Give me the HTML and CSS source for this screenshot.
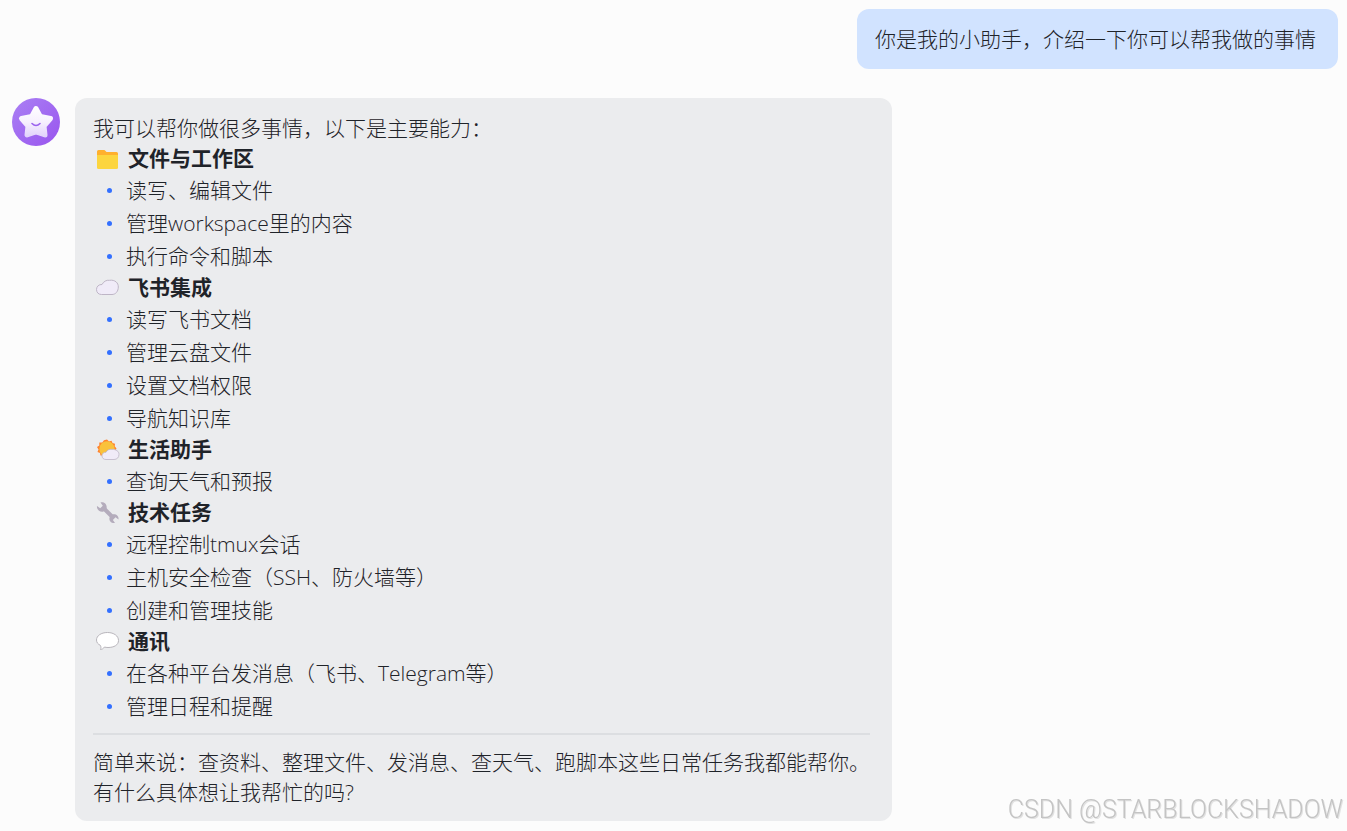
FILE: index.html
```html
<!DOCTYPE html>
<html lang="zh-CN">
<head>
    <meta charset="UTF-8">
    <meta name="viewport" content="width=device-width, initial-scale=1.0">
    <title>小助手</title>
    <link rel="stylesheet" href="styles.css">
</head>
<body>
    <main class="chat">
        <div class="message user">
            <div class="bubble">你是我的小助手，介绍一下你可以帮我做的事情</div>
        </div>

        <div class="message bot">
            <svg class="avatar" viewBox="0 0 48 48" aria-hidden="true">
                <defs>
                    <linearGradient id="purple" x1="0" y1="0" x2="1" y2="1">
                        <stop offset="0" stop-color="#aa80f4"/>
                        <stop offset="1" stop-color="#9955ee"/>
                    </linearGradient>
                    <linearGradient id="star" gradientUnits="userSpaceOnUse" x1="0" y1="8" x2="0" y2="40">
                        <stop offset="0" stop-color="#ffffff"/>
                        <stop offset="0.5" stop-color="#f7f0fe"/>
                        <stop offset="1" stop-color="#e0cffb"/>
                    </linearGradient>
                </defs>
                <circle cx="24" cy="24" r="24" fill="url(#purple)"/>
                <path d="M24 10.500 L28.300 18.500 L38.500 20.500 L32 28 L33 37 L24 34 L15 37 L16 28 L9.500 20.500 L19.700 18.500 Z" fill="url(#star)" stroke="url(#star)" stroke-width="5" stroke-linejoin="round"/>
                <path d="M20 25.500 Q24 29.500 28 25.500" fill="none" stroke="#9b62ee" stroke-width="1.600" stroke-linecap="round"/>
            </svg>
            <div class="bubble">
                <p>我可以帮你做很多事情，以下是主要能力：</p>

                <h2>
                    <svg class="icon" viewBox="0 0 24 24" aria-hidden="true">
                        <path d="M1 5.500 Q1 4 2.500 4 H8 Q9 4 9.500 5 L10.500 6 H20.500 Q22 6 22 7.500 V12 H1 Z" fill="#ffb02e"/>
                        <path d="M1 9 H22 V21.500 Q22 23 20.500 23 H2.500 Q1 23 1 21.500 Z" fill="#fcd53f"/>
                    </svg>
                    文件与工作区
                </h2>
                <ul>
                    <li>读写、编辑文件</li>
                    <li>管理workspace里的内容</li>
                    <li>执行命令和脚本</li>
                </ul>

                <h2>
                    <svg class="icon" viewBox="0 0 24 24" aria-hidden="true">
                        <path d="M5.500 19.500 C2.500 19.500 0.500 17.500 0.500 14.500 C0.500 11.500 2.800 9.300 6 9.500 C7.500 6.500 10.500 4.800 13.500 5.300 C19 4.500 22.500 8 22.300 12 C22.300 16.500 19.500 19.500 16 19.500 Z" fill="#f0ebf8" stroke="#beb5c6"/>
                    </svg>
                    飞书集成
                </h2>
                <ul>
                    <li>读写飞书文档</li>
                    <li>管理云盘文件</li>
                    <li>设置文档权限</li>
                    <li>导航知识库</li>
                </ul>

                <h2>
                    <svg class="icon" viewBox="0 0 24 24" aria-hidden="true">
                        <path d="M11 2.500 L13 4.500 L15.500 3.700 L16.500 6 L19 6.700 L18.700 9.300 L20.500 11.500 L19 14 L18.500 17 L16 18 L14 20.500 L11 19.500 L8.500 20.500 L7 18.500 L4.500 18.500 L4 16 L1.500 15 L2.500 12.500 L1 10 L3.300 8.500 L3.300 5.500 L6.300 5.500 L8 3.200 Z" fill="#ff822d"/>
                        <circle cx="11" cy="12" r="7.700" fill="#f9c23c"/>
                        <path d="M10 22.500 C7.500 22.500 6 21 6 18.800 C6 16.500 7.800 15 10 15.300 C11.200 12.800 13.500 12 16 12.300 C20 12.300 23 14.200 23 17.300 C23 20.500 21 22.500 18 22.500 Z" fill="#f0ebf8" stroke="#beb5c6" stroke-width="0.800"/>
                    </svg>
                    生活助手
                </h2>
                <ul>
                    <li>查询天气和预报</li>
                </ul>

                <h2>
                    <svg class="icon" viewBox="0 0 24 24" aria-hidden="true">
                        <path d="M7 7.500 L17 17.500" stroke="#b4acbc" stroke-width="4" fill="none"/>
                        <path d="M4.500 2.500 C8 1.500 11.500 4.500 10.500 8.500 L7.500 11.500 C4 12.500 0.500 9.500 1 6 L4.200 8.300 L6.800 5.700 Z" fill="#b4acbc"/>
                        <path d="M19 23 C15.500 23.500 12.700 21 13.500 17.500 L16.500 14.500 C20 13.800 23 16 22.500 19.500 L19.500 17.300 L16.900 20 Z" fill="#b4acbc"/>
                    </svg>
                    技术任务
                </h2>
                <ul>
                    <li>远程控制tmux会话</li>
                    <li>主机安全检查（SSH、防火墙等）</li>
                    <li>创建和管理技能</li>
                </ul>

                <h2>
                    <svg class="icon" viewBox="0 0 24 24" aria-hidden="true">
                        <path d="M11.500 3.500 C18 3.500 22.500 7 22.500 11.500 C22.500 16 18 18.500 12 18.500 C10.500 18.500 9.500 18.300 8.500 18 C7.500 19.500 6 20.500 4.500 20.500 C5.200 19 5 17.500 4.300 16.300 C2 15.200 0.500 13.500 0.500 11 C0.500 6.800 5 3.500 11.500 3.500 Z" fill="#ffffff" stroke="#b8b5bb"/>
                    </svg>
                    通讯
                </h2>
                <ul>
                    <li>在各种平台发消息（飞书、Telegram等）</li>
                    <li>管理日程和提醒</li>
                </ul>

                <hr>

                <p>简单来说：查资料、整理文件、发消息、查天气、跑脚本这些日常任务我都能帮你。</p>
                <p>有什么具体想让我帮忙的吗?</p>
            </div>
        </div>
    </main>

    <div class="watermark">CSDN @STARBLOCKSHADOW</div>
</body>
</html>
```
FILE: styles.css
```css
* {
    box-sizing: border-box;
}

body {
    margin: 0;
    background-color: #fcfcfc;
    color: #1f2329;
    font-family: "Open Sans", "Noto Sans CJK SC", sans-serif;
    font-size: 21px;
    font-weight: 300;
    line-height: 30px;
}

.chat {
    display: flex;
    flex-direction: column;
    gap: 29px;
    padding: 9px 9px 9px 12px;
}

.message {
    display: flex;
    align-items: flex-start;
    gap: 15px;
}

.bubble {
    padding: 15px 22px 14px 18px;
    border-radius: 12px;
    background-color: #ebecee;
}

.user {
    justify-content: flex-end;
}

.user .bubble {
    padding-bottom: 15px;
    background-color: #d1e3ff;
}

.avatar {
    flex: none;
    width: 48px;
    height: 48px;
}

p, h2 {
    margin: 0;
}

h2 {
    display: flex;
    align-items: center;
    gap: 8px;
    padding-left: 3px;
    font-size: 21px;
    font-weight: 700;
    line-height: 30px;
}

.icon {
    flex: none;
    width: 24px;
    height: 24px;
}

ul {
    display: flex;
    flex-direction: column;
    gap: 3px;
    margin: 0;
    padding: 2px 0 1px 14px;
    list-style: none;
}

li {
    display: flex;
    align-items: center;
    gap: 14px;
}

li::before {
    content: "";
    width: 5px;
    height: 5px;
    border-radius: 50%;
    background-color: #3370ff;
}

hr {
    height: 2px;
    margin: 11px 0 12px;
    border: none;
    background-color: #dcdee1;
}

.watermark {
    position: fixed;
    right: 4px;
    bottom: 6px;
    color: #c4c4c4;
    font-family: Roboto, sans-serif;
    font-size: 25px;
    text-shadow: 1px 1px 0 #e2e2e2;
}
```
